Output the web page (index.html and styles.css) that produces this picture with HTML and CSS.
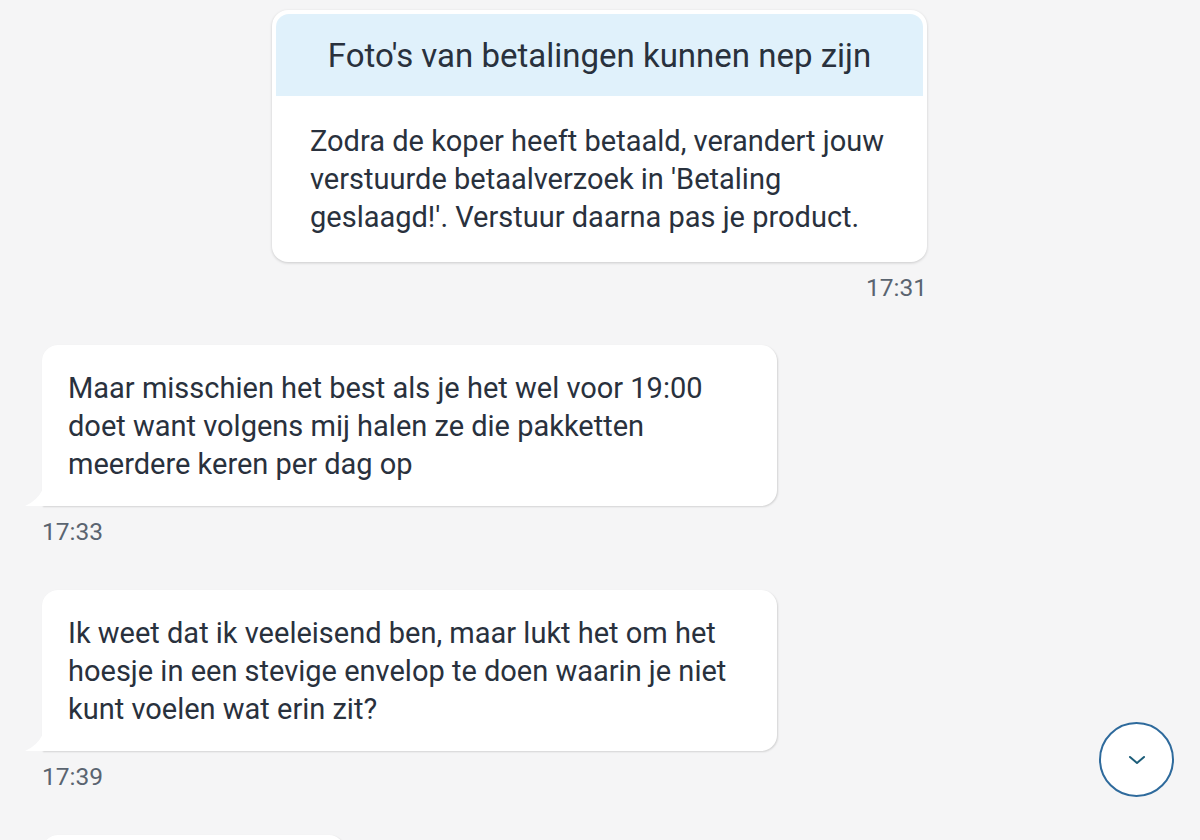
FILE: index.html
```html
<!DOCTYPE html>
<html lang="nl">
<head>
<meta charset="utf-8">
<link rel="stylesheet" href="styles.css">
</head>
<body>
<main class="chat">
  <section class="notice-wrap">
    <div class="notice">
      <div class="notice-head">Foto's van betalingen kunnen nep zijn</div>
      <div class="notice-body">Zodra de koper heeft betaald, verandert jouw verstuurde betaalverzoek in 'Betaling geslaagd!'. Verstuur daarna pas je product.</div>
    </div>
    <div class="time time-right">17:31</div>
  </section>

  <div class="msg">
    <div class="bubble">Maar misschien het best als je het wel voor 19:00 doet want volgens mij halen ze die pakketten meerdere keren per dag op</div>
    <div class="time">17:33</div>
  </div>

  <div class="msg">
    <div class="bubble">Ik weet dat ik veeleisend ben, maar lukt het om het hoesje in een stevige envelop te doen waarin je niet kunt voelen wat erin zit?</div>
    <div class="time">17:39</div>
  </div>

  <div class="msg">
    <div class="bubble bubble-short">&nbsp;</div>
  </div>
</main>
<button class="scroll-down" aria-label="Naar beneden">
  <svg width="20" height="12" viewBox="0 0 20 12"><path d="M3 3 L10 9 L17 3" fill="none" stroke="#1c5d79" stroke-width="2" stroke-linecap="round" stroke-linejoin="round"/></svg>
</button>
</body>
</html>
```
FILE: styles.css
```css
html, body {
  margin: 0;
  padding: 0;
  background: #f5f5f6;
  height: 100%;
  overflow: hidden;
}
body {
  font-family: Roboto, "Noto Sans", sans-serif;
  color: #29313d;
  position: relative;
}
.chat {
  display: flex;
  flex-direction: column;
  padding: 10px 0 0 42px;
}
.notice-wrap {
  align-self: flex-start;
  margin-left: 230px;
  width: 655px;
  display: flex;
  flex-direction: column;
}
.notice {
  background: #fff;
  border-radius: 16px;
  padding: 4px;
  box-shadow: 0 1px 3px rgba(0,0,0,0.18);
}
.notice-head {
  background: #e0f1fb;
  border-radius: 13px 13px 0 0;
  height: 82px;
  display: flex;
  align-items: center;
  justify-content: center;
  font-size: 33px;
}
.notice-body {
  padding: 26px 34px 22px;
  font-size: 29px;
  line-height: 38px;
}
.time {
  font-size: 24.5px;
  color: #5a6470;
  line-height: 28px;
  margin-top: 12px;
}
.time-right {
  align-self: flex-end;
}
.msg {
  display: flex;
  flex-direction: column;
  align-items: flex-start;
  margin-top: 44px;
}
.notice-wrap + .msg {
  margin-top: 43px;
}
.bubble {
  position: relative;
  background: #fff;
  width: 683px;
  padding: 24px 26px 23px;
  font-size: 29px;
  line-height: 38px;
  border-radius: 16px 16px 16px 0;
  box-shadow: 1px 1px 2px rgba(0,0,0,0.14);
}
.bubble::before {
  content: "";
  position: absolute;
  left: -17px;
  bottom: 0;
  width: 18px;
  height: 17px;
  background: #fff;
  clip-path: path("M0 17 Q12 12 18 0 L18 17 Z");
}
.bubble-short {
  width: 251px;
}
.scroll-down {
  position: absolute;
  left: 1099px;
  top: 722px;
  width: 75px;
  height: 75px;
  border-radius: 50%;
  border: 2px solid #2e6a9c;
  background: #fff;
  display: flex;
  align-items: center;
  justify-content: center;
  padding: 0;
}
```
